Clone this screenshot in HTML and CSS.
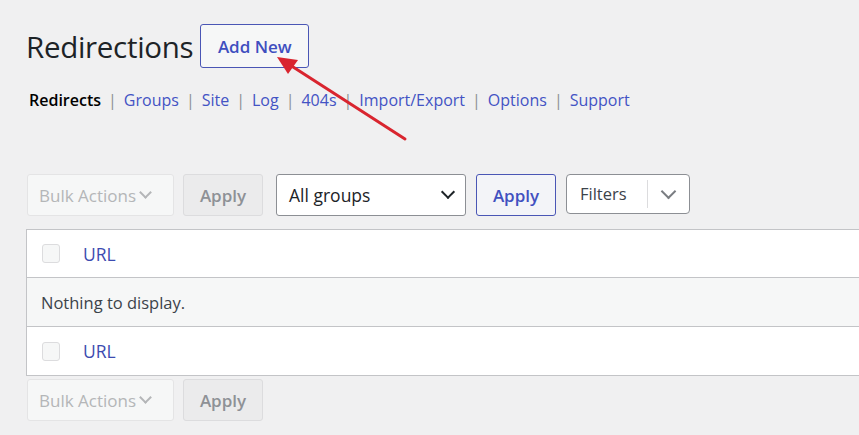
FILE: index.html
```html
<!DOCTYPE html>
<html lang="en-US">
<head>
	<title>Redirections</title>
	<meta charset="UTF-8">
	<link rel="stylesheet" href="styles.css">
</head>
<body>
	<div id="wrap">
		<div class="heading">
			<h1>Redirections</h1>
			<button type="button" class="add-new">Add New</button>
		</div>
		<ul class="subnav">
			<li><span class="current">Redirects</span></li>
			<li><a href="#">Groups</a></li>
			<li><a href="#">Site</a></li>
			<li><a href="#">Log</a></li>
			<li><a href="#">404s</a></li>
			<li><a href="#">Import/Export</a></li>
			<li><a href="#">Options</a></li>
			<li><a href="#">Support</a></li>
		</ul>

		<div class="tablenav top">
			<div class="select disabled">Bulk Actions <span class="chev small"></span></div>
			<button type="button" class="btn disabled">Apply</button>
			<div class="select groups">All groups <span class="chev"></span></div>
			<button type="button" class="btn primary">Apply</button>
			<div class="split">
				<span class="split-label">Filters</span>
				<span class="split-toggle"><span class="chev grey"></span></span>
			</div>
		</div>

		<table class="list">
			<thead>
				<tr>
					<td class="check"><span class="box"></span></td>
					<th><a href="#">URL</a></th>
				</tr>
			</thead>
			<tbody>
				<tr class="empty">
					<td colspan="2">Nothing to display.</td>
				</tr>
			</tbody>
			<tfoot>
				<tr>
					<td class="check"><span class="box"></span></td>
					<th><a href="#">URL</a></th>
				</tr>
			</tfoot>
		</table>

		<div class="tablenav bottom">
			<div class="select disabled">Bulk Actions <span class="chev small"></span></div>
			<button type="button" class="btn disabled">Apply</button>
		</div>
	</div>

	<!-- annotation arrow pointing at Add New -->
	<svg class="arrow" width="859" height="435" viewBox="0 0 859 435">
		<line x1="405" y1="139" x2="290" y2="65" stroke="#d9252f" stroke-width="3" stroke-linecap="round"/>
		<polygon points="277,57 298,60 288,74" fill="#d9252f"/>
	</svg>
</body>
</html>
```

FILE: styles.css
```css
html, body {
	margin: 0;
	height: 100%;
	overflow: hidden;
}
body {
	background: #f0f0f1;
	font-family: "Open Sans", "Noto Sans", sans-serif;
	color: #1d2327;
	position: relative;
}
#wrap {
	padding: 24px 0 0 26px;
}
.heading {
	display: flex;
	align-items: center;
	gap: 7px;
}
.heading h1 {
	margin: 0;
	font-size: 29.5px;
	font-weight: 400;
	color: #1d2327;
	letter-spacing: -0.3px;
}
.add-new {
	height: 44px;
	width: 109px;
	border: 1px solid #4a56b5;
	border-radius: 3px;
	background: #f6f7f7;
	color: #3f4fbf;
	font-family: inherit;
	font-size: 17px;
	font-weight: 600;
	padding: 0;
}
.subnav {
	list-style: none;
	margin: 20px 0 0 3px;
	padding: 0;
	display: flex;
	font-size: 16px;
	height: 24px;
	align-items: center;
}
.subnav li + li::before {
	content: "|";
	color: #8c8f94;
	margin: 0 7px 0 7px;
}
.subnav a {
	color: #4353c4;
	text-decoration: none;
}
.subnav .current {
	font-weight: 600;
	color: #000;
}
.tablenav {
	display: flex;
	align-items: flex-start;
	gap: 9px;
	height: 42px;
}
.tablenav.top {
	margin-top: 62px;
	margin-left: 1px;
}
.tablenav.bottom {
	margin-top: 3px;
	margin-left: 1px;
}
.select, .btn {
	box-sizing: border-box;
	height: 42px;
	border-radius: 3px;
	font-family: inherit;
	font-size: 17px;
	display: flex;
	align-items: center;
}
.select.disabled {
	width: 147px;
	padding-left: 11px;
	border: 1px solid #e4e4e5;
	background: #f6f7f7;
	color: #b4b6b8;
	gap: 5px;
}
.btn {
	justify-content: center;
	padding: 0;
	font-weight: 600;
}
.btn.disabled {
	width: 80px;
	border: 1px solid #dcdcde;
	background: #ebebec;
	color: #8e9196;
}
.select.groups {
	width: 190px;
	margin-left: 4px;
	padding: 0 12px;
	border: 1px solid #8c8f94;
	background: #fff;
	color: #1d2327;
	font-size: 17.5px;
	justify-content: space-between;
}
.btn.primary {
	width: 80px;
	margin-left: 1px;
	border: 1px solid #4a56b5;
	background: #f3f4f8;
	color: #4150c0;
}
.split {
	box-sizing: border-box;
	height: 40px;
	width: 124px;
	margin-left: 1px;
	display: flex;
	align-items: center;
	border: 1px solid #8c8f94;
	border-radius: 4px;
	background: #fff;
	color: #3c434a;
	font-size: 16.5px;
}
.split-label {
	padding-left: 13px;
	width: 67px;
	border-right: 1px solid #dcdcde;
	line-height: 28px;
}
.split-toggle {
	flex: 1;
	display: flex;
	justify-content: center;
}
.chev {
	display: inline-block;
	width: 8px;
	height: 8px;
	border-right: 2px solid #1d2327;
	border-bottom: 2px solid #1d2327;
	transform: rotate(45deg);
	margin-top: -6px;
}
.chev.small {
	width: 7px;
	height: 7px;
	border-color: #b4b6b8;
	margin-top: -5px;
}
.chev.grey {
	border-color: #7a7d82;
	width: 9px;
	height: 9px;
}
table.list {
	margin-top: 13px;
	border-collapse: collapse;
	width: 860px;
	background: #fff;
	border: 1px solid #c3c4c7;
	font-size: 16.5px;
}
table.list td, table.list th {
	height: 48px;
	padding: 0;
	text-align: left;
	font-weight: 400;
}
table.list thead td, table.list thead th {
	height: 47px;
}
table.list td.check {
	width: 41px;
	padding-left: 15px;
}
.box {
	display: block;
	width: 16px;
	height: 17px;
	border: 1px solid #dcdcde;
	border-radius: 3px;
	background: #f6f7f7;
}
table.list th a {
	color: #3c4bb0;
	text-decoration: none;
	font-size: 17.5px;
}
tr.empty td {
	background: #f6f7f7;
	border-top: 1px solid #c3c4c7;
	border-bottom: 1px solid #c3c4c7;
	padding-left: 14px;
	color: #3c434a;
}
.arrow {
	position: absolute;
	left: 0;
	top: 0;
	pointer-events: none;
}
```
